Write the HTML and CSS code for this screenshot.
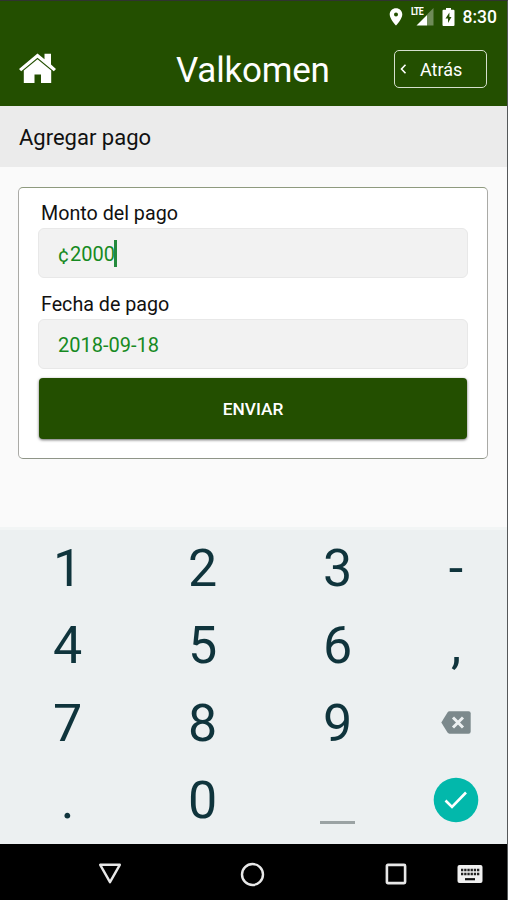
FILE: index.html
```html
<!DOCTYPE html>
<html lang="es">
<head>
    <meta charset="UTF-8">
    <meta name="viewport" content="width=device-width, initial-scale=1.0">
    <title>Valkomen - Agregar pago</title>
    <link rel="stylesheet" href="styles.css">
</head>
<body>
    <div class="phone">
        <div class="status-bar">
            <svg class="icon-pin" width="14" height="18" viewBox="0 0 14 18">
                <path fill="#fff" fill-rule="evenodd" d="M7 0.3C3.5 0.3 0.7 3 0.7 6.5C0.7 11 7 17.5 7 17.5S13.3 11 13.3 6.5C13.3 3 10.5 0.3 7 0.3ZM7 4.5a2 2 0 1 1 0 4a2 2 0 1 1 0-4Z"/>
            </svg>
            <div class="signal">
                <span class="lte">LTE</span>
                <svg width="18" height="18" viewBox="0 0 18 18">
                    <path fill="#6f8b58" d="M17.5 0V17.5H11V6.5Z"/>
                    <path fill="#fff" d="M0.5 17.5L11 7V17.5Z"/>
                </svg>
            </div>
            <svg class="icon-battery" width="13" height="18" viewBox="0 0 13 18">
                <path fill="#fff" d="M4 0H9V1.8H11.5Q12.5 1.8 12.5 2.8V17Q12.5 18 11.5 18H1.5Q0.5 18 0.5 17V2.8Q0.5 1.8 1.5 1.8H4Z"/>
                <path fill="#234f00" d="M7.4 4.5L3.5 10.5H6V15L9.5 9H7.4Z"/>
            </svg>
            <span class="clock">8:30</span>
        </div>
        <header class="header">
            <svg class="home" width="37" height="31" viewBox="0 0 37 31">
                <path fill="#fff" d="M18.5 0.5L25.5 6.3V0.7H32V11.6L37 16L34.8 18.3L18.5 4.8L2.2 18.3L0 16Z"/>
                <path fill="#fff" d="M18.5 6.3L32.2 17.6V30H22V21.5H15.5V30H4.8V17.6Z"/>
            </svg>
            <h1>Valkomen</h1>
            <button class="back">
                <svg width="7" height="10" viewBox="0 0 7 10">
                    <path d="M5.5 0.8L1.5 5L5.5 9.2" fill="none" stroke="#fff" stroke-width="1.6"/>
                </svg>
                <span>Atrás</span>
            </button>
        </header>
        <h2 class="subtitle">Agregar pago</h2>
        <main class="content">
            <form class="card">
                <label>Monto del pago</label>
                <div class="field"><span class="cent">¢</span>2000<span class="caret"></span></div>
                <label class="second">Fecha de pago</label>
                <div class="field">2018-09-18</div>
                <button class="send" type="button">ENVIAR</button>
            </form>
        </main>
        <div class="keyboard">
            <span>1</span>
            <span>2</span>
            <span>3</span>
            <span>-</span>
            <span>4</span>
            <span>5</span>
            <span>6</span>
            <span>,</span>
            <span>7</span>
            <span>8</span>
            <span>9</span>
            <span>
                <svg width="30" height="23" viewBox="0 0 30 23">
                    <path fill="#7c898c" d="M8.5 0.3H27.5Q29.7 0.3 29.7 2.5V20.5Q29.7 22.7 27.5 22.7H8.5Q7.3 22.7 6.5 21.6L0.3 11.5L6.5 1.4Q7.3 0.3 8.5 0.3Z"/>
                    <path d="M12 6.5L22 16.5M22 6.5L12 16.5" stroke="#ecf0f1" stroke-width="3"/>
                </svg>
            </span>
            <span>.</span>
            <span>0</span>
            <span><i class="space"></i></span>
            <span>
                <svg width="46" height="46" viewBox="0 0 46 46">
                    <circle cx="23" cy="23" r="22.3" fill="#02b8ab"/>
                    <path d="M12.5 23.5L19 30L33 15.5" fill="none" stroke="#fff" stroke-width="2.6"/>
                </svg>
            </span>
        </div>
        <nav class="nav-bar">
            <svg width="24" height="22" viewBox="0 0 24 22">
                <path d="M2.2 1.8H21.8L12 19.2Z" fill="none" stroke="#e8e8e8" stroke-width="2.4" stroke-linejoin="round"/>
            </svg>
            <svg class="nav-home" width="25" height="25" viewBox="0 0 25 25">
                <circle cx="12.5" cy="12.5" r="10.5" fill="none" stroke="#e8e8e8" stroke-width="2.4"/>
            </svg>
            <svg class="nav-recent" width="22" height="22" viewBox="0 0 22 22">
                <rect x="1.9" y="1.9" width="18.2" height="18.2" rx="1" fill="none" stroke="#e8e8e8" stroke-width="2.6"/>
            </svg>
            <svg class="nav-keyboard" width="26" height="18" viewBox="0 0 26 18">
                <rect x="0.5" y="0" width="25" height="18" rx="2" fill="#f0f0f0"/>
                <path d="M4 5H22.5M4 9H22.5" stroke="#222" stroke-width="2.7" stroke-dasharray="2.3 0.9"/>
                <path d="M8 14.2H18" stroke="#111" stroke-width="2.2"/>
            </svg>
        </nav>
    </div>
</body>
</html>
```
FILE: styles.css
```css
* {
    box-sizing: border-box;
}
body {
    margin: 0;
    font-family: Roboto, sans-serif;
    background-color: #fafafa;
}
.phone {
    width: 508px;
    height: 900px;
    display: flex;
    flex-direction: column;
    border-top: 1px solid #303330;
    border-right: 1px solid #55585a;
    overflow: hidden;
}
.status-bar {
    height: 33px;
    display: flex;
    align-items: center;
    justify-content: flex-end;
    padding: 0 10px 2px 0;
    background-color: #234f00;
    color: white;
}
.signal {
    width: 23px;
    height: 18px;
    margin-left: 8px;
    display: flex;
    justify-content: flex-end;
    position: relative;
}
.lte {
    position: absolute;
    top: -1px;
    left: 0;
    font: bold 11px/10px "Roboto", sans-serif;
    letter-spacing: -0.9px;
    transform: scaleX(0.8);
    transform-origin: left;
}
.icon-battery {
    margin-left: 8px;
}
.clock {
    margin-left: 8px;
    font-size: 17.5px;
    font-weight: 500;
}
.header {
    height: 72px;
    display: flex;
    align-items: center;
    padding: 0 20px 0 19px;
    background-color: #234f00;
    color: white;
}
.header h1 {
    flex: 1;
    margin: 2px 0 0 120px;
    font-size: 35px;
    font-weight: 400;
    line-height: 42px;
    letter-spacing: -0.2px;
}
.home {
    margin-bottom: 4px;
}
.back {
    width: 93px;
    height: 38px;
    margin-bottom: 2px;
    display: flex;
    align-items: center;
    padding: 0 0 0 5px;
    border: 1.5px solid #d5dfcd;
    border-radius: 5px;
    background: none;
    color: white;
    font: 400 18px Roboto, sans-serif;
}
.back span {
    margin-left: 13px;
}
.subtitle {
    height: 61px;
    margin: 0;
    padding-left: 19px;
    background-color: #ebebeb;
    color: #111;
    font-size: 22px;
    font-weight: 400;
    line-height: 63px;
}
.content {
    flex: 1;
    padding: 20px 19px 0 18px;
    background-color: #fafafa;
}
.card {
    height: 272px;
    display: flex;
    flex-direction: column;
    padding: 11px 19px;
    border: 1px solid #aaaaa6;
    border-top-color: #8e9a7e;
    border-bottom-color: #8f9588;
    border-radius: 5px;
    background-color: white;
}
.card label {
    height: 29px;
    padding-left: 3px;
    color: #111;
    font-size: 19.7px;
    line-height: 30px;
}
.card .second {
    margin-top: 12px;
}
.field {
    height: 50px;
    display: flex;
    align-items: center;
    padding: 1px 0 0 19px;
    border: 1px solid #e8e8e8;
    border-radius: 6px;
    background-color: #f2f2f2;
    color: #168a22;
    font-size: 20px;
}
.cent {
    margin: 2px 1px 0 0;
}
.caret {
    width: 3px;
    height: 27px;
    margin-left: -1px;
    background-color: #248a3c;
}
.send {
    height: 61px;
    margin: 9px 1px 0;
    border: none;
    border-radius: 4px;
    background-color: #234f00;
    box-shadow: 0 1px 3px rgba(0, 0, 0, 0.6);
    color: white;
    font: 500 17.3px Roboto, sans-serif;
}
.keyboard {
    height: 317px;
    display: grid;
    grid-template-columns: 135px 135px 135px 102px;
    grid-template-rows: repeat(4, 77.3px);
    border-top: 3px solid #f2f5f5;
    background-color: #ecf0f1;
    color: #0f343c;
    font-size: 52px;
}
.keyboard span {
    display: flex;
    align-items: center;
    justify-content: center;
}
.keyboard svg {
    margin-bottom: 2px;
}
.space {
    width: 35px;
    height: 3px;
    margin-top: 43px;
    background-color: #9ba3a4;
}
.nav-bar {
    height: 56px;
    display: flex;
    align-items: center;
    padding: 4px 0 0 98px;
    background-color: black;
}
.nav-home {
    margin-left: 118px;
}
.nav-recent {
    margin-left: 120px;
}
.nav-keyboard {
    margin-left: 50px;
}
```
